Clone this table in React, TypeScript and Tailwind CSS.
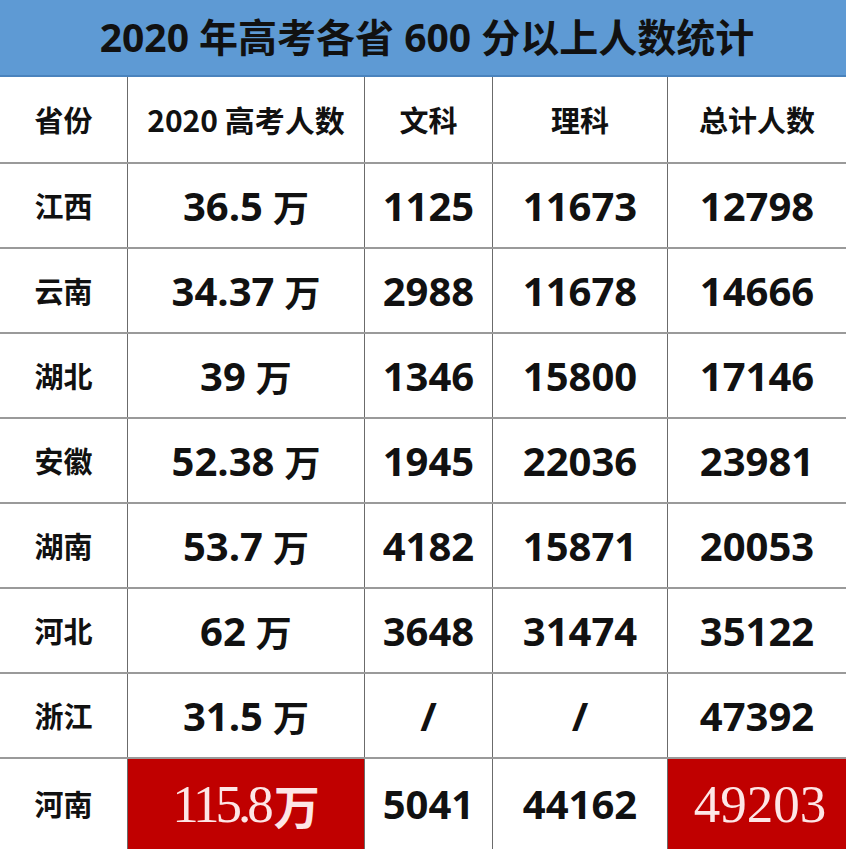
import React from "react";

const cols = ["w-[128px]", "w-[237px]", "w-[128px]", "w-[175px]", "flex-1"];

type Row = { p: string; total: string; wen: string; li: string; sum: string };

const rows: Row[] = [
  { p: "江西", total: "36.5", wen: "1125", li: "11673", sum: "12798" },
  { p: "云南", total: "34.37", wen: "2988", li: "11678", sum: "14666" },
  { p: "湖北", total: "39", wen: "1346", li: "15800", sum: "17146" },
  { p: "安徽", total: "52.38", wen: "1945", li: "22036", sum: "23981" },
  { p: "湖南", total: "53.7", wen: "4182", li: "15871", sum: "20053" },
  { p: "河北", total: "62", wen: "3648", li: "31474", sum: "35122" },
  { p: "浙江", total: "31.5", wen: "/", li: "/", sum: "47392" },
];

const sans = "font-['Open_Sans','Noto_Sans_CJK_SC',sans-serif]";
const cjk = "font-['Noto_Sans_CJK_SC',sans-serif]";

function Num({ children }: { children: React.ReactNode }) {
  return <span className={`${sans} text-[40px] font-bold leading-none text-[#111]`}>{children}</span>;
}

export default function App() {
  return (
    <div className="w-[846px] h-[849px] bg-white flex flex-col overflow-hidden">
      <div className="h-[77px] bg-[#5e9ad4] border-b-2 border-[#4a83bd] flex items-center justify-center">
        <span className={`${sans} text-[39px] font-bold text-[#111] pl-[8px]`}>
          2020 年高考各省 600 分以上人数统计
        </span>
      </div>
      <div className="h-[87px] flex border-b-2 border-[#9a9a9a]">
        {["省份", "2020 高考人数", "文科", "理科", "总计人数"].map((t, i) => (
          <div
            key={i}
            className={`${cols[i]} flex items-center justify-center ${i < 4 ? "border-r border-[#6b6b6b]" : ""}`}
          >
            <span className={`${cjk} ${i === 1 ? "text-[30px]" : "text-[29px]"} font-bold text-[#111]`}>{t}</span>
          </div>
        ))}
      </div>
      {rows.map((r) => (
        <div key={r.p} className="h-[85px] flex border-b-2 border-[#9a9a9a]">
          <div className={`${cols[0]} flex items-center justify-center border-r border-[#6b6b6b]`}>
            <span className={`${cjk} text-[29px] font-bold text-[#111]`}>{r.p}</span>
          </div>
          <div className={`${cols[1]} flex items-center justify-center gap-[10px] border-r border-[#6b6b6b]`}>
            <Num>{r.total}</Num>
            <span className={`${cjk} text-[36px] font-bold leading-none text-[#111]`}>万</span>
          </div>
          <div className={`${cols[2]} flex items-center justify-center border-r border-[#6b6b6b]`}>
            <Num>{r.wen}</Num>
          </div>
          <div className={`${cols[3]} flex items-center justify-center border-r border-[#6b6b6b]`}>
            <Num>{r.li}</Num>
          </div>
          <div className={`${cols[4]} flex items-center justify-center`}>
            <Num>{r.sum}</Num>
          </div>
        </div>
      ))}
      <div className="flex-1 flex">
        <div className={`${cols[0]} flex items-center justify-center border-r border-[#6b6b6b]`}>
          <span className={`${cjk} text-[29px] font-bold text-[#111]`}>河南</span>
        </div>
        <div className={`${cols[1]} flex items-center justify-center bg-[#c00000] border-r border-[#6b6b6b]`}>
          <span className="font-['Liberation_Serif',serif] text-[53px] leading-none text-[#fde6e6] tracking-[-4px]">
            115.8
          </span>
          <span className={`${cjk} font-semibold text-[46px] leading-none text-[#fde6e6] pl-[4px]`}>万</span>
        </div>
        <div className={`${cols[2]} flex items-center justify-center border-r border-[#6b6b6b]`}>
          <Num>5041</Num>
        </div>
        <div className={`${cols[3]} flex items-center justify-center border-r border-[#6b6b6b]`}>
          <Num>44162</Num>
        </div>
        <div className={`${cols[4]} flex items-center justify-center bg-[#c00000] pl-[6px]`}>
          <span className="font-['Liberation_Serif',serif] text-[53px] leading-none text-[#fde6e6]">49203</span>
        </div>
      </div>
    </div>
  );
}
